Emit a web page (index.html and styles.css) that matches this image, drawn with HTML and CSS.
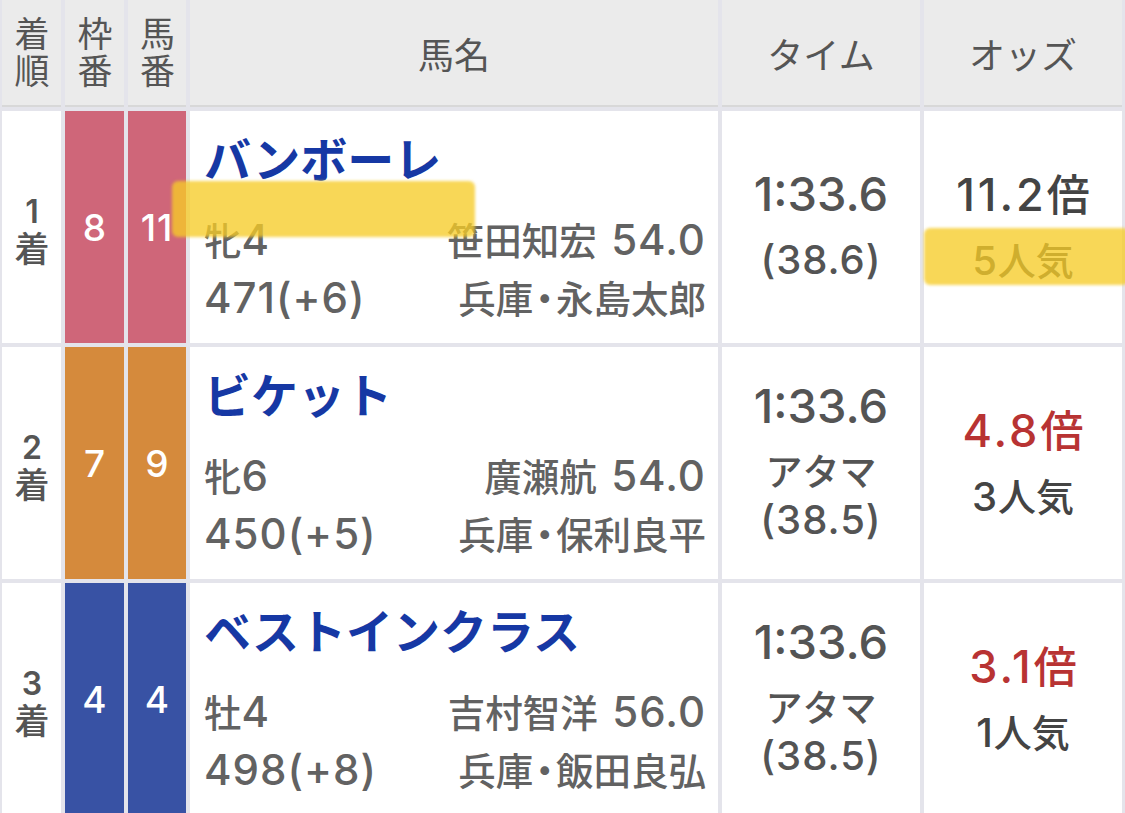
FILE: index.html
```html
<!DOCTYPE html>
<html lang="ja">
<head>
<meta charset="utf-8">
<title>レース結果</title>
<link rel="stylesheet" href="styles.css">
</head>
<body>
<div class="result">
  <div class="table">
    <div class="th"><span class="vertical">着順</span></div>
    <div class="th"><span class="vertical">枠番</span></div>
    <div class="th"><span class="vertical">馬番</span></div>
    <div class="th">馬名</div>
    <div class="th">タイム</div>
    <div class="th">オッズ</div>

    <div class="td rank"><span class="rank-text"><span class="rank-num">1</span>着</span></div>
    <div class="td frame f8">8</div>
    <div class="td frame f8 num-wide">11</div>
    <div class="td horse">
      <div class="name">バンボーレ</div>
      <div class="details">
        <div class="line"><span>牝<span class="num">4</span></span><span>笹田知宏 <span class="num">54.0</span></span></div>
        <div class="line"><span class="num">471(+6)</span><span>兵庫<span class="dot">・</span>永島太郎</span></div>
      </div>
    </div>
    <div class="td time">
      <div class="time-main">1:33.6</div>
      <div class="time-sub"><span class="num-sub">(38.6)</span></div>
    </div>
    <div class="td odds">
      <div class="odds-main"><span class="num-odds">11.2</span>倍</div>
      <div class="pop"><span class="num-pop">5</span>人気</div>
    </div>

    <div class="td rank"><span class="rank-text"><span class="rank-num">2</span>着</span></div>
    <div class="td frame f7">7</div>
    <div class="td frame f7">9</div>
    <div class="td horse">
      <div class="name">ビケット</div>
      <div class="details">
        <div class="line"><span>牝<span class="num">6</span></span><span>廣瀬航 <span class="num">54.0</span></span></div>
        <div class="line"><span class="num">450(+5)</span><span>兵庫<span class="dot">・</span>保利良平</span></div>
      </div>
    </div>
    <div class="td time">
      <div class="time-main">1:33.6</div>
      <div class="time-sub">アタマ</div>
      <div class="time-sub"><span class="num-sub">(38.5)</span></div>
    </div>
    <div class="td odds">
      <div class="odds-main red"><span class="num-odds">4.8</span>倍</div>
      <div class="pop"><span class="num-pop">3</span>人気</div>
    </div>

    <div class="td rank"><span class="rank-text"><span class="rank-num">3</span>着</span></div>
    <div class="td frame f4">4</div>
    <div class="td frame f4">4</div>
    <div class="td horse">
      <div class="name">ベストインクラス</div>
      <div class="details">
        <div class="line"><span>牡<span class="num">4</span></span><span>吉村智洋 <span class="num">56.0</span></span></div>
        <div class="line"><span class="num">498(+8)</span><span>兵庫<span class="dot">・</span>飯田良弘</span></div>
      </div>
    </div>
    <div class="td time">
      <div class="time-main">1:33.6</div>
      <div class="time-sub">アタマ</div>
      <div class="time-sub"><span class="num-sub">(38.5)</span></div>
    </div>
    <div class="td odds">
      <div class="odds-main red"><span class="num-odds">3.1</span>倍</div>
      <div class="pop"><span class="num-pop">1</span>人気</div>
    </div>
  </div>
  <div class="marker marker-name"></div>
  <div class="marker marker-pop"></div>
</div>
</body>
</html>
```

FILE: styles.css
```css
html, body {
  margin: 0;
  padding: 0;
  background: #ffffff;
}

body {
  width: 1125px;
  height: 813px;
  overflow: hidden;
  font-family: "Noto Sans CJK JP", "Noto Sans", sans-serif;
}

.result {
  position: relative;
}

.table {
  display: grid;
  grid-template-columns: 59px 59px 58px 528px 198px 198px;
  grid-template-rows: 107px 232px 232px 232px;
  column-gap: 4px;
  row-gap: 4px;
  padding: 0 3px 0 2px;
  background: #e4e4eb;
}

.th {
  background: #ebebeb;
  border-bottom: 2px solid #d8d8d8;
  color: #555555;
  font-size: 36px;
  font-weight: 400;
  display: flex;
  align-items: center;
  justify-content: center;
  box-sizing: border-box;
}

.vertical {
  writing-mode: vertical-rl;
  text-orientation: upright;
  font-size: 35px;
  line-height: 40px;
  letter-spacing: 2px;
}

.td {
  background: #ffffff;
  box-sizing: border-box;
}

/* numerals: a wider Latin face, like the system font of the original */
.num,
.num-sub,
.num-odds,
.num-pop,
.rank-num,
.frame,
.time-main {
  font-family: "Inter", "Liberation Sans", sans-serif;
}

.rank {
  display: flex;
  align-items: center;
  justify-content: center;
  color: #555555;
  padding-top: 4px;
}

.rank-text {
  writing-mode: vertical-rl;
  text-orientation: upright;
  font-size: 35px;
  font-weight: 500;
  line-height: 40px;
}

.rank-num {
  font-size: 32px;
  font-weight: 600;
}

.frame {
  display: flex;
  align-items: center;
  justify-content: center;
  color: #ffffff;
  font-size: 37px;
  font-weight: 500;
}

.num-wide {
  letter-spacing: 1px;
}

.f8 { background: #cf6679; }
.f7 { background: #d58a3c; }
.f4 { background: #3852a4; }

.horse {
  display: flex;
  flex-direction: column;
  justify-content: space-between;
  padding: 16px 12px 17px 14px;
}

.name {
  color: #1638a4;
  font-size: 47px;
  font-weight: 700;
  line-height: 60px;
  white-space: nowrap;
}

.line {
  display: flex;
  justify-content: space-between;
  align-items: baseline;
  color: #626262;
  font-size: 37.5px;
  font-weight: 500;
  line-height: 57px;
  word-spacing: 6px;
  white-space: nowrap;
}

.dot {
  font-feature-settings: "halt" 1;
  padding: 0 2px;
}

.num {
  font-size: 42px;
  font-weight: 500;
  letter-spacing: 1px;
  word-spacing: 0;
}

.time {
  display: flex;
  flex-direction: column;
  align-items: center;
  justify-content: center;
  padding-bottom: 17px;
  color: #545454;
}

.time-main {
  font-size: 47px;
  font-weight: 500;
  line-height: 81px;
}

.time-sub {
  font-size: 37px;
  font-weight: 500;
  line-height: 48px;
}

.num-sub {
  font-size: 40px;
  letter-spacing: 1px;
}

.odds {
  display: flex;
  flex-direction: column;
  align-items: center;
  justify-content: center;
  padding-bottom: 17px;
  color: #444444;
}

.odds-main {
  font-size: 43px;
  font-weight: 500;
  line-height: 80px;
}

.num-odds {
  font-size: 45px;
  letter-spacing: 3px;
}

.odds-main.red {
  color: #b83333;
}

.pop {
  font-size: 38px;
  font-weight: 500;
  line-height: 48px;
}

.num-pop {
  font-size: 40px;
  letter-spacing: 1px;
}

.marker {
  position: absolute;
  background: rgba(246, 204, 40, 0.78);
  border-radius: 6px;
  filter: blur(1.5px);
}

.marker-name {
  left: 172px;
  top: 181px;
  width: 303px;
  height: 56px;
}

.marker-pop {
  left: 924px;
  top: 228px;
  width: 205px;
  height: 57px;
}
```
